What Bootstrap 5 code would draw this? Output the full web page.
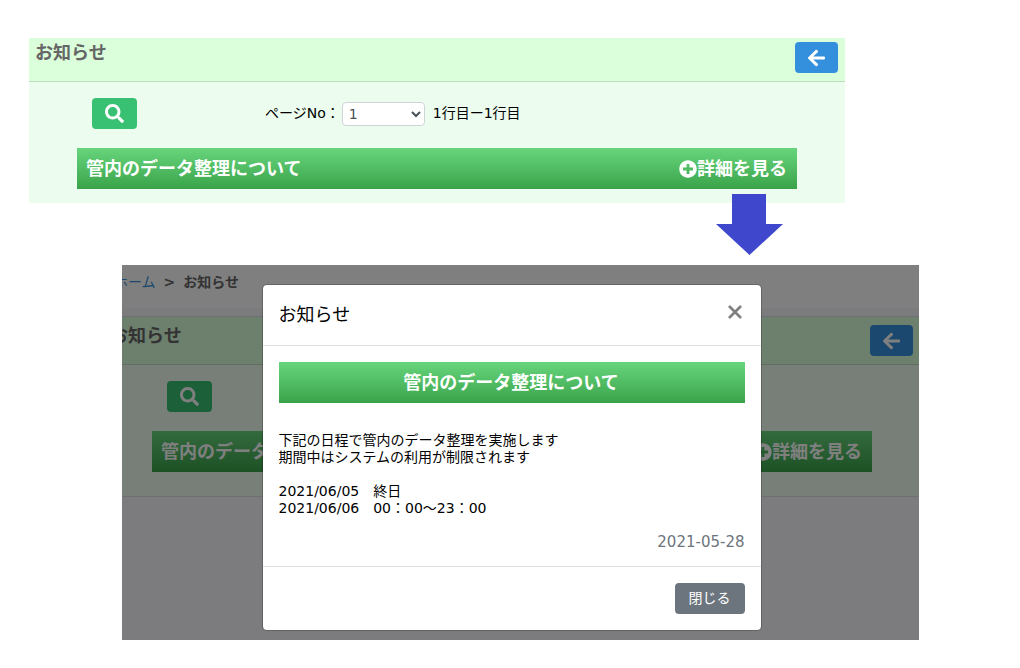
<!DOCTYPE html>
<html lang="ja">
<head>
<meta charset="utf-8">
<meta name="viewport" content="width=device-width, initial-scale=1">
<title>お知らせ</title>
<link href="https://cdn.jsdelivr.net/npm/bootstrap@5.3.0/dist/css/bootstrap.min.css" rel="stylesheet">
<style>
  body { font-family: "DejaVu Sans", "Noto Sans CJK JP", sans-serif; font-size: 14px; color: #000; background: #fff; }
  .list-view { margin: 38px 175px 0 29px; }
  .detail-view { margin: 10px 101px 28px 122px; }

  .title-bar { background: #dbffdb; border-bottom: 1px solid #bfdcc1; padding: 4px 7px 8px 6px; }
  .title-bar h1 { font-size: 18px; line-height: 22px; font-weight: 700; color: #666; margin: 0; }
  .notice-area { background: #ecfdef; padding: 16px 48px 14px; }
  .notice-row { height: 41px; padding: 0 10px 0 9px; background: linear-gradient(#67d57c, #3aa34a); color: #fff; font-size: 18px; font-weight: 700; }
  .notice-row a { color: inherit; }

  .icon-btn { height: 31px; padding: 0; border: 0; border-radius: 4px; color: #fff; }
  .icon-btn svg { display: block; margin: auto; }
  .search-btn, .search-btn:hover { width: 45px; margin-left: 15px; background: #38c172; }
  .back-btn, .back-btn:hover { width: 43px; background: #3490dc; }
  .tools { height: 31px; margin-bottom: 19px; }
  .page-select { width: 83px; height: 24px; margin: 0 8px 0 2px; padding: 0 2px; border: 1px solid #ced4da; border-radius: 4px; background: #fff; color: #495057; }

  .flow-arrow { height: 52px; }
  .flow-arrow svg { position: absolute; top: -9px; right: 62px; }

  /* Scrolled list page, dimmed behind the dialog */
  .page-frame { margin-left: -18px; min-height: 375px; background: #f8f9fc; }
  .crumbs { height: 43px; padding: 0 10px 8px; background: #fff; color: #666; font-weight: 700; }
  .crumbs a { color: #3490dc; font-weight: 400; }
  .page-frame .title-bar { margin-top: 8px; border-top: 1px solid #dcdfe2; padding-top: 8px; padding-right: 6px; }
  .page-frame .notice-area { padding: 16px 47px 24px 48px; border-bottom: 1px solid #dcdfe2; background: #f1fff0; }
  .dim { background: rgba(0, 0, 0, .5); }

  .dialog-box { max-width: 500px; margin: 19px auto 0; border: 1px solid rgba(0, 0, 0, .2); border-radius: 5px; background: #fff; background-clip: padding-box; }
  .dialog-box .modal-header { height: 61px; padding: 16px; border-bottom: 1px solid #dee2e6; }
  .dialog-box .modal-title { font-size: 18px; font-weight: 400; }
  .dialog-box .modal-body { padding: 16px; }
  .dialog-box .notice-text { margin: 29px 0 17px; line-height: 17px; }
  .dialog-box time { font-size: 15px; line-height: 16px; color: #6c757d; }
  .dialog-box .modal-footer { height: 64px; padding: 16px; border-top: 1px solid #dee2e6; }
  .dialog-box .modal-footer > * { margin: 0; }
  .close-x { width: 20px; height: 22px; color: #808080; }
  .shut-btn { height: 31px; width: 70px; padding: 0; font-size: 14px; border-radius: 4px; background: #6c757d; }
</style>
</head>
<body>
<svg class="d-none" aria-hidden="true">
  <symbol id="i-search" viewBox="0 0 512 512"><path fill="currentColor" d="M505 442.700L405.300 343c-4.500-4.500-10.600-7-17-7H372c27.600-35.300 44-79.700 44-128C416 93.100 322.900 0 208 0S0 93.100 0 208s93.100 208 208 208c48.300 0 92.700-16.400 128-44v16.300c0 6.400 2.500 12.500 7 17l99.700 99.700c9.400 9.400 24.600 9.400 33.900 0l28.300-28.300c9.400-9.400 9.400-24.600.1-34zM208 336c-70.700 0-128-57.200-128-128 0-70.700 57.200-128 128-128 70.700 0 128 57.200 128 128 0 70.700-57.200 128-128 128z"/></symbol>
  <symbol id="i-left" viewBox="0 0 448 512"><path fill="currentColor" d="M257.500 445.100l-22.200 22.200c-9.400 9.400-24.600 9.400-33.900 0L7 273c-9.400-9.400-9.400-24.600 0-33.900L201.400 44.700c9.400-9.400 24.600-9.400 33.900 0l22.200 22.200c9.500 9.500 9.300 25-.4 34.300L136.600 216H424c13.300 0 24 10.700 24 24v32c0 13.300-10.700 24-24 24H136.600l120.500 114.800c9.800 9.300 10 24.800.4 34.300z"/></symbol>
  <symbol id="i-plus" viewBox="0 0 512 512"><path fill="currentColor" d="M256 8C119 8 8 119 8 256s111 248 248 248 248-111 248-248S393 8 256 8zm144 276c0 6.600-5.400 12-12 12h-92v92c0 6.600-5.400 12-12 12h-56c-6.600 0-12-5.400-12-12v-92h-92c-6.600 0-12-5.400-12-12v-56c0-6.600 5.400-12 12-12h92v-92c0-6.600 5.400-12 12-12h56c6.600 0 12 5.400 12 12v92h92c6.600 0 12 5.400 12 12v56z"/></symbol>
</svg>

<section class="list-view">
  <header class="title-bar d-flex justify-content-between align-items-start">
    <h1>お知らせ</h1>
    <button type="button" class="btn icon-btn back-btn" aria-label="戻る"><svg width="17" height="20"><use href="#i-left"/></svg></button>
  </header>
  <div class="notice-area">
    <div class="tools row g-0 align-items-center">
      <div class="col-3"><button type="button" class="btn icon-btn search-btn" aria-label="検索"><svg width="19" height="19"><use href="#i-search"/></svg></button></div>
      <div class="col d-flex align-items-center ps-2">
        <label for="page-no">ページNo：</label>
        <select id="page-no" class="page-select"><option>1</option></select>
        <span>1行目ー1行目</span>
      </div>
    </div>
    <div class="notice-row d-flex justify-content-between align-items-center">
      <span>管内のデータ整理について</span>
      <a href="#notice" class="d-flex align-items-center text-decoration-none"><svg width="18" height="18"><use href="#i-plus"/></svg>詳細を見る</a>
    </div>
  </div>
  <div class="flow-arrow position-relative">
    <svg width="67" height="61" viewBox="0 0 67 61" aria-hidden="true"><path fill="#3f48cc" d="M16 0H50V30H67L33.500 61L0 30H16Z"/></svg>
  </div>
</section>

<section class="detail-view position-relative overflow-hidden">
  <div class="page-frame position-relative">
    <nav class="crumbs d-flex align-items-center gap-2" aria-label="パンくず"><a href="#" class="text-decoration-none">ホーム</a><span>&gt;</span><span>お知らせ</span></nav>
    <header class="title-bar d-flex justify-content-between align-items-start">
      <h1>お知らせ</h1>
      <button type="button" class="btn icon-btn back-btn" aria-label="戻る"><svg width="17" height="20"><use href="#i-left"/></svg></button>
    </header>
    <div class="notice-area">
      <div class="tools"><button type="button" class="btn icon-btn search-btn" aria-label="検索"><svg width="19" height="19"><use href="#i-search"/></svg></button></div>
      <div class="notice-row d-flex justify-content-between align-items-center">
        <span>管内のデータ</span>
        <a href="#notice" class="d-flex align-items-center text-decoration-none"><svg width="18" height="18"><use href="#i-plus"/></svg>詳細を見る</a>
      </div>
    </div>

    <div class="dim position-absolute top-0 start-0 w-100 h-100 overflow-hidden">
      <div class="dialog-box" id="notice" role="dialog" aria-labelledby="notice-title">
        <div class="modal-header align-items-start">
          <h2 class="modal-title lh-base" id="notice-title">お知らせ</h2>
          <button type="button" class="close-x btn p-0 border-0" aria-label="閉じる"><svg class="d-block m-auto" width="14" height="14" viewBox="0 0 14 14"><path d="M1 1L13 13M13 1L1 13" stroke="currentColor" stroke-width="2.700"/></svg></button>
        </div>
        <div class="modal-body">
          <div class="notice-row d-flex justify-content-center align-items-center">管内のデータ整理について</div>
          <p class="notice-text">下記の日程で管内のデータ整理を実施します<br>期間中はシステムの利用が制限されます<br><br>2021/06/05　終日<br>2021/06/06　00：00～23：00</p>
          <time class="d-block text-end" datetime="2021-05-28">2021-05-28</time>
        </div>
        <div class="modal-footer"><button type="button" class="shut-btn btn btn-secondary border-0">閉じる</button></div>
      </div>
    </div>
  </div>
</section>
<script src="https://cdn.jsdelivr.net/npm/bootstrap@5.3.0/dist/js/bootstrap.bundle.min.js"></script>
</body>
</html>
